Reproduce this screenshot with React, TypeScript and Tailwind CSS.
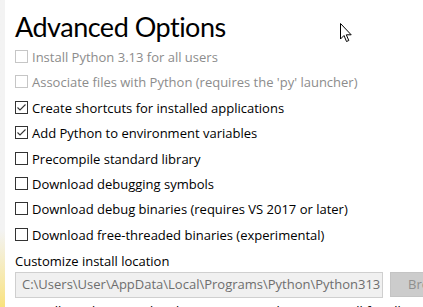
import React from "react";

const F = { fontFamily: '"Open Sans", "Noto Sans", sans-serif' };

type Row = { label: string; checked: boolean; disabled: boolean };

const rows: Row[] = [
  { label: "Install Python 3.13 for all users", checked: false, disabled: true },
  { label: "Associate files with Python (requires the 'py' launcher)", checked: false, disabled: true },
  { label: "Create shortcuts for installed applications", checked: true, disabled: false },
  { label: "Add Python to environment variables", checked: true, disabled: false },
  { label: "Precompile standard library", checked: false, disabled: false },
  { label: "Download debugging symbols", checked: false, disabled: false },
  { label: "Download debug binaries (requires VS 2017 or later)", checked: false, disabled: false },
  { label: "Download free-threaded binaries (experimental)", checked: false, disabled: false },
];

function Box({ checked, disabled }: { checked: boolean; disabled: boolean }) {
  return (
    <svg width="13" height="13" viewBox="0 0 13 13" className="shrink-0">
      <rect x="0.5" y="0.5" width="12" height="12" fill="white" stroke={disabled ? "#c6c6c6" : "#333333"} />
      {checked && (
        <path d="M2.5 6.5 L5 9 L10.5 3.5" fill="none" stroke="#333333" strokeWidth="1.1" />
      )}
    </svg>
  );
}

export default function App() {
  return (
    <div className="w-[423px] h-[307px] overflow-hidden flex bg-white relative" style={F}>
      <div className="w-[5px] shrink-0 bg-gradient-to-b from-[#f3f3f3] via-[#f3f3f3] via-75% to-[#f9e27c]" />
      <div className="flex flex-col pl-[10px] min-w-0">
        <h1
          className="text-[27px] leading-[28px] mt-[13px] text-black whitespace-nowrap tracking-[-0.5px]"
          style={{ fontFamily: 'Lato, "Open Sans", sans-serif' }}
        >
          Advanced Options
        </h1>
        <div className="flex flex-col mt-[9px]">
          {rows.map((r) => (
            <div key={r.label} className="h-[25.4px] flex items-start gap-[4px]">
              <Box checked={r.checked} disabled={r.disabled} />
              <span
                className={`text-[13px] leading-[14px] whitespace-nowrap ${r.disabled ? "text-[#8c8c8c]" : "text-black"}`}
              >
                {r.label}
              </span>
            </div>
          ))}
        </div>
        <div className="text-[13px] leading-[13px] mt-[2px] text-black whitespace-nowrap">Customize install location</div>
        <div className="flex gap-[7px] mt-[4px] w-[420px]">
          <div className="w-[368px] h-[26px] shrink-0 bg-[#f0f0f0] border border-[#cfcfcf] flex items-center pl-[6px] overflow-hidden">
            <span className="text-[13px] text-[#6e6e6e] whitespace-nowrap">C:\Users\User\AppData\Local\Programs\Python\Python313</span>
          </div>
          <div className="w-[80px] h-[25px] shrink-0 bg-[#cccccc] border border-[#c4c4c4] flex items-center pl-[17px]">
            <span className="text-[13px] text-[#8f8f8f]">Browse</span>
          </div>
        </div>
        <div className="text-[13px] leading-[13px] mt-[7px] text-black whitespace-nowrap">
          You will need to provide administrator privileges to install for all users
        </div>
      </div>
      <svg className="absolute left-[340px] top-[23px]" width="13" height="20" viewBox="0 0 13 20">
        <path d="M0.5 0.5 L0.5 16 L4 12.5 L6.5 18.5 L8.8 17.5 L6.3 11.8 L11.2 11.8 Z" fill="white" stroke="black" strokeWidth="1" strokeLinejoin="round" />
      </svg>
    </div>
  );
}
